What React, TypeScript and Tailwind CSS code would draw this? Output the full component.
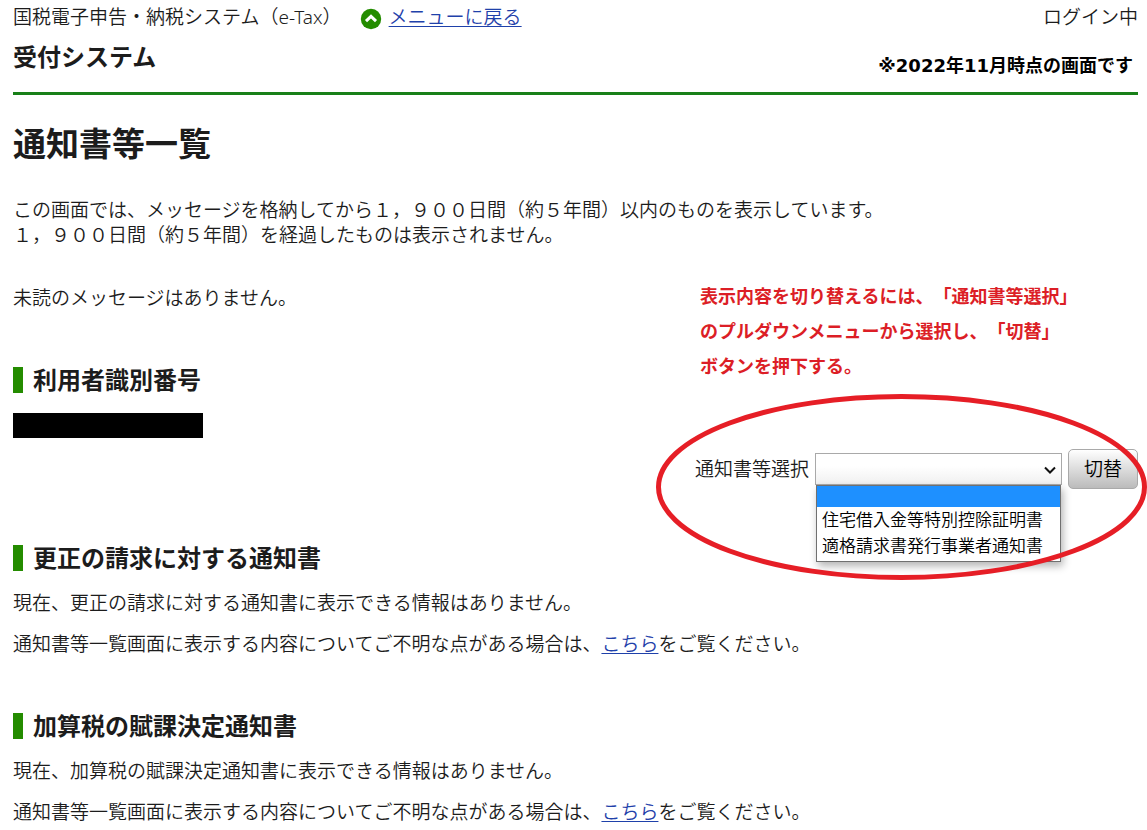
import { useState } from "react";

// ─── Shared pieces ───────────────────────────────────────────────────

const NOTICE_TYPES = ["住宅借入金等特別控除証明書", "適格請求書発行事業者通知書"];

function SectionHeading({ children }: { children: React.ReactNode }) {
  return (
    <h2 className="border-l-[10px] border-[#248c00] pl-[10px] text-[24px] leading-[26px] font-bold">
      {children}
    </h2>
  );
}

function TextLink({ children }: { children: React.ReactNode }) {
  return (
    <a href="#" className="text-[#1f41aa] underline underline-offset-2">
      {children}
    </a>
  );
}

function NoticeSection({ title }: { title: string }) {
  return (
    <section className="mt-14">
      <SectionHeading>{title}</SectionHeading>
      <p className="mt-[19px]">現在、{title}に表示できる情報はありません。</p>
      <p className="mt-[15px]">
        通知書等一覧画面に表示する内容についてご不明な点がある場合は、<TextLink>こちら</TextLink>をご覧ください。
      </p>
    </section>
  );
}

// ─── Header ──────────────────────────────────────────────────────────

function Header() {
  return (
    <header className="border-b-3 border-[#188018] pt-1 pb-[17px]">
      <div className="flex items-center justify-between">
        <div className="flex items-center">
          <span>国税電子申告・納税システム（e-Tax）</span>
          <svg viewBox="0 0 22 22" className="mt-1 mr-[7px] ml-[18px] size-[22px]" aria-hidden="true">
            <circle cx="11" cy="11" r="10.2" fill="#248c00" />
            <path d="M6 13.2 L11 8.4 L16 13.2" fill="none" stroke="#fff" strokeWidth="3" />
          </svg>
          <TextLink>メニューに戻る</TextLink>
        </div>
        <span>ログイン中</span>
      </div>
      <div className="mt-[9px] flex items-end justify-between">
        <p className="text-[24px] leading-9 font-bold">受付システム</p>
        <p className="pr-[5px] font-['DejaVu_Sans','Noto_Sans_CJK_JP',sans-serif] text-[18px] leading-[18px] font-bold text-black">
          ※2022年11月時点の画面です
        </p>
      </div>
    </header>
  );
}

// ─── Notice selector ─────────────────────────────────────────────────

function NoticeSelector() {
  const [selected, setSelected] = useState("");

  return (
    <form className="relative mt-[65px] flex items-center gap-[6px]" onSubmit={(e) => e.preventDefault()}>
      <label htmlFor="notice-type">通知書等選択</label>
      <div className="relative w-[247px]">
        <select
          id="notice-type"
          value={selected}
          onChange={(e) => setSelected(e.target.value)}
          className="block h-8 w-full appearance-none border border-[#a9a9a9] bg-linear-to-b from-white from-40% to-[#f0f0f0] px-1 text-[17px]"
        >
          <option value=""></option>
          {NOTICE_TYPES.map((name) => (
            <option key={name}>{name}</option>
          ))}
        </select>
        <svg viewBox="0 0 12 8" className="pointer-events-none absolute top-[13px] right-[6px] h-2 w-3" aria-hidden="true">
          <path d="M1 1.5 L6 6.5 L11 1.5" fill="none" stroke="#111" strokeWidth="2" />
        </svg>
        {/* opened list */}
        <ul className="absolute inset-x-px top-full z-10 border border-[#707070] bg-white pb-[2px] text-[17px] text-black shadow-[2px_4px_8px_rgba(0,0,0,0.3)]">
          <li className="h-[21px] bg-[#1e90ff]" />
          {NOTICE_TYPES.map((name) => (
            <li key={name} className="cursor-pointer px-[5px] whitespace-nowrap" onClick={() => setSelected(name)}>
              {name}
            </li>
          ))}
        </ul>
      </div>
      <button
        type="submit"
        className="h-10 w-[70px] rounded-[5px] border border-[#a9a9a9] bg-linear-to-b from-white to-[#bbb] text-black"
      >
        切替
      </button>
      {/* red ring around the controls */}
      <svg
        viewBox="0 0 491 186"
        className="pointer-events-none absolute -top-[55px] -right-[9px] z-20 h-[186px] w-[491px]"
        aria-hidden="true"
      >
        <ellipse cx="245.5" cy="93" rx="243" ry="90.5" fill="none" stroke="#e61e26" strokeWidth="5" />
      </svg>
    </form>
  );
}

// ─── Page ────────────────────────────────────────────────────────────

export default function App() {
  return (
    <div className="min-h-screen bg-white pr-[9px] pb-1 pl-[13px] font-['Noto_Sans','Noto_Sans_CJK_JP',sans-serif] text-[19px] leading-[26px] font-[350] text-[#1c1c1c] [text-spacing-trim:space-all]">
      <Header />
      <main>
        <h1 className="mt-[25px] text-[33px] leading-[48px] font-bold">通知書等一覧</h1>
        <p className="mt-[30px] leading-[25px]">
          この画面では、メッセージを格納してから１，９００日間（約５年間）以内のものを表示しています。
          <br />
          １，９００日間（約５年間）を経過したものは表示されません。
        </p>

        <div className="mt-[31px] flex items-start justify-between">
          <div className="pt-[6px]">
            <p className="mb-14">未読のメッセージはありません。</p>
            <SectionHeading>利用者識別番号</SectionHeading>
            <div className="mt-5 h-[25px] w-[190px] bg-black" />
          </div>
          <div>
            <p className="pl-[5px] text-[18px] leading-[35px] font-bold text-[#dc1e26]">
              表示内容を切り替えるには、「通知書等選択」
              <br />
              のプルダウンメニューから選択し、「切替」
              <br />
              ボタンを押下する。
            </p>
            <NoticeSelector />
          </div>
        </div>

        <NoticeSection title="更正の請求に対する通知書" />
        <NoticeSection title="加算税の賦課決定通知書" />
      </main>
    </div>
  );
}
